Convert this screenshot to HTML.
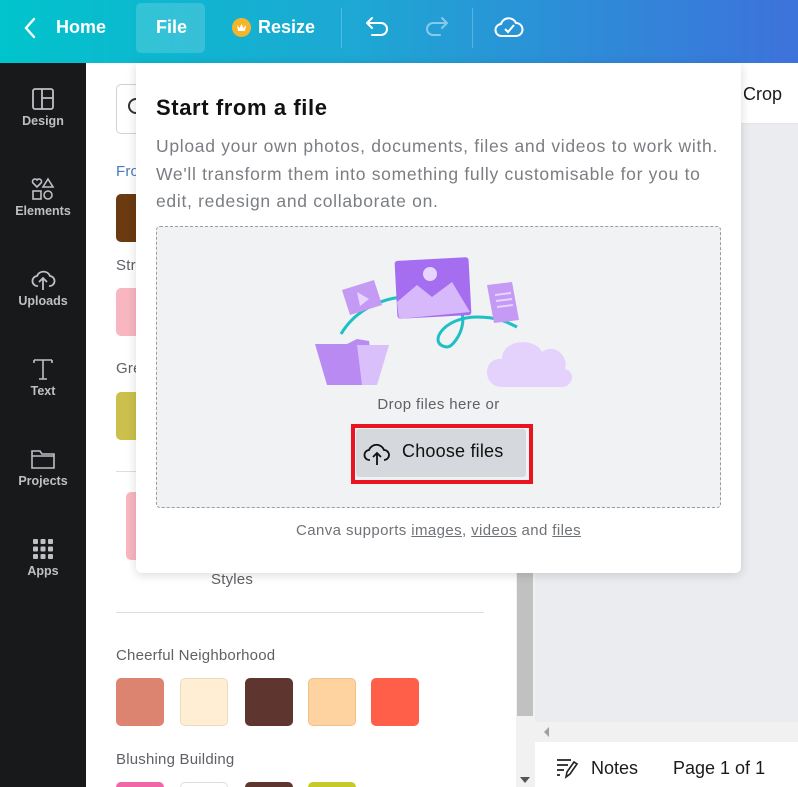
<!DOCTYPE html>
<html><head><style>
*{margin:0;padding:0;box-sizing:border-box}
html,body{width:798px;height:787px;overflow:hidden}
body{position:relative;font-family:"Liberation Sans",sans-serif;background:#fff}
.abs{position:absolute}
.hdr{left:0;top:0;width:798px;height:63px;background:linear-gradient(90deg,#00c4cc 0%,#1ea7d4 45%,#3d72db 100%)}
.hdr .t{position:absolute;top:17px;color:#fff;font-weight:bold;font-size:18px}
.side{left:0;top:63px;width:86px;height:724px;background:#18191b}
.si{position:absolute;width:86px;text-align:center;color:#bfc0c4;font-size:12.5px;font-weight:bold}
.sw{position:absolute;width:48px;height:48px;border-radius:5px}
.lbl{position:absolute;font-size:15px;color:#5e6166;letter-spacing:.2px}
</style></head><body>
<div class="abs hdr">
 <svg class="abs" style="left:20px;top:16px" width="20" height="24"><path d="M14 3 L6 12 L14 21" stroke="#fff" stroke-width="2.4" fill="none" stroke-linecap="round"/></svg>
 <div class="t" style="left:56px">Home</div>
 <div class="abs" style="left:136px;top:3px;width:69px;height:50px;background:rgba(255,255,255,.16);border-radius:5px"></div>
 <div class="t" style="left:156px">File</div>
 <div class="abs" style="left:232px;top:18px;width:19px;height:19px;border-radius:50%;background:#f5b52a"></div>
 <svg class="abs" style="left:235px;top:21px" width="13" height="13"><path d="M2 4 L4.5 7 L6.5 3 L8.5 7 L11 4 L10 10 L3 10Z" fill="#fff"/></svg>
 <div class="t" style="left:258px">Resize</div>
 <div class="abs" style="left:341px;top:8px;width:1px;height:40px;background:rgba(255,255,255,.25)"></div>
 <svg class="abs" style="left:364px;top:14px" width="28" height="26"><path d="M8 4 L3 9 L8 14 M3 9 H17 a6 6 0 0 1 0 12 H8" stroke="#fff" stroke-width="2" fill="none" stroke-linecap="round" stroke-linejoin="round"/></svg>
 <svg class="abs" style="left:422px;top:14px" width="28" height="26"><path d="M20 4 L25 9 L20 14 M25 9 H11 a6 6 0 0 0 0 12 H18" stroke="rgba(255,255,255,.45)" stroke-width="2" fill="none" stroke-linecap="round" stroke-linejoin="round"/></svg>
 <div class="abs" style="left:472px;top:8px;width:1px;height:40px;background:rgba(255,255,255,.25)"></div>
 <svg class="abs" style="left:494px;top:14px" width="30" height="26"><path d="M8 22 a6 6 0 0 1 -1 -12 a8 8 0 0 1 15 -1 a6 6 0 0 1 0 13 Z" stroke="#fff" stroke-width="2" fill="none"/><path d="M11 15 L14 18 L20 11" stroke="#fff" stroke-width="2" fill="none"/></svg>
</div>
<div class="abs side">
 <div class="si" style="top:24px"><svg width="24" height="24"><rect x="2" y="2" width="20" height="20" rx="2" stroke="#bfc0c4" stroke-width="1.8" fill="none"/><path d="M11 2V22M11 11H22" stroke="#bfc0c4" stroke-width="1.8"/></svg><div>Design</div></div>
 <div class="si" style="top:114px"><svg width="24" height="24"><path d="M6 10 L2 6 a2.4 2.4 0 0 1 4 -3 a2.4 2.4 0 0 1 4 3Z" stroke="#bfc0c4" stroke-width="1.6" fill="none"/><path d="M17 2 L22 10 H12Z" stroke="#bfc0c4" stroke-width="1.6" fill="none"/><rect x="2" y="14" width="8" height="8" stroke="#bfc0c4" stroke-width="1.6" fill="none"/><circle cx="17" cy="18" r="4" stroke="#bfc0c4" stroke-width="1.6" fill="none"/></svg><div>Elements</div></div>
 <div class="si" style="top:204px"><svg width="26" height="24"><path d="M8 19 a5 5 0 0 1 -1 -10 a7 7 0 0 1 13 0 a5 5 0 0 1 -1 10" stroke="#bfc0c4" stroke-width="1.8" fill="none"/><path d="M13 23V12M9 15L13 11L17 15" stroke="#bfc0c4" stroke-width="1.8" fill="none"/></svg><div>Uploads</div></div>
 <div class="si" style="top:294px"><svg width="24" height="24"><path d="M3 3H21M12 3V22M8 22H16M3 3V6M21 3V6" stroke="#bfc0c4" stroke-width="1.6" fill="none"/></svg><div>Text</div></div>
 <div class="si" style="top:384px"><svg width="26" height="24"><path d="M2 4H10L12 7H24V21H2Z M2 9H24" stroke="#bfc0c4" stroke-width="1.6" fill="none"/></svg><div>Projects</div></div>
 <div class="si" style="top:474px"><svg width="24" height="24"><g fill="#bfc0c4"><rect x="2" y="2" width="5" height="5" rx="1"/><rect x="9.5" y="2" width="5" height="5" rx="1"/><rect x="17" y="2" width="5" height="5" rx="1"/><rect x="2" y="9.5" width="5" height="5" rx="1"/><rect x="9.5" y="9.5" width="5" height="5" rx="1"/><rect x="17" y="9.5" width="5" height="5" rx="1"/><rect x="2" y="17" width="5" height="5" rx="1"/><rect x="9.5" y="17" width="5" height="5" rx="1"/><rect x="17" y="17" width="5" height="5" rx="1"/></g></svg><div>Apps</div></div>
</div>
<div class="abs" style="left:116px;top:84px;width:60px;height:50px;border:1px solid #d0d2d6;border-radius:5px"></div>
<div class="abs" style="left:128px;top:98px;width:16px;height:16px;border:2px solid #333;border-radius:50%"></div>
<div class="lbl" style="left:116px;top:163px;color:#4a78b8">From</div>
<div class="sw" style="left:116px;top:194px;background:#6b3a10"></div>
<div class="lbl" style="left:116px;top:257px">Str</div>
<div class="sw" style="left:116px;top:288px;background:#f8b6c0"></div>
<div class="lbl" style="left:116px;top:360px">Gre</div>
<div class="sw" style="left:116px;top:392px;background:#cbc04c"></div>
<div class="abs" style="left:116px;top:471px;width:368px;height:1px;background:#dcdde0"></div>
<div class="abs" style="left:126px;top:492px;width:30px;height:68px;background:#f8b6c0;border-radius:5px"></div>
<div class="lbl" style="left:211px;top:571px">Styles</div>
<div class="abs" style="left:116px;top:612px;width:368px;height:1px;background:#dcdde0"></div>
<div class="lbl" style="left:116px;top:647px">Cheerful Neighborhood</div>
<div class="sw" style="left:116px;top:678px;background:#dd8471"></div>
<div class="sw" style="left:180px;top:678px;background:#ffeed4;border:1px solid #eadbbf"></div>
<div class="sw" style="left:245px;top:678px;background:#5e362f"></div>
<div class="sw" style="left:308px;top:678px;background:#ffd3a0;border:1px solid #f0c08a"></div>
<div class="sw" style="left:371px;top:678px;background:#ff5e48"></div>
<div class="lbl" style="left:116px;top:751px">Blushing Building</div>
<div class="sw" style="left:116px;top:782px;height:5px;border-radius:5px 5px 0 0;background:#f067a8"></div>
<div class="sw" style="left:180px;top:782px;height:5px;border-radius:5px 5px 0 0;background:#fff;border:1px solid #ddd;border-bottom:0"></div>
<div class="sw" style="left:245px;top:782px;height:5px;border-radius:5px 5px 0 0;background:#5e362f"></div>
<div class="sw" style="left:308px;top:782px;height:5px;border-radius:5px 5px 0 0;background:#c5c92a"></div>
<div class="abs" style="left:516px;top:63px;width:19px;height:724px;background:#f1f1f1"></div>
<div class="abs" style="left:517px;top:560px;width:16px;height:156px;background:#c1c1c1"></div>
<div class="abs" style="left:520px;top:777px;width:0;height:0;border-left:5px solid transparent;border-right:5px solid transparent;border-top:6px solid #555"></div>
<div class="abs" style="left:535px;top:63px;width:263px;height:61px;background:#fff;border-bottom:1px solid #e5e5e5"></div>
<div class="abs" style="left:743px;top:84px;font-size:18px;color:#1a1a1a">Crop</div>
<div class="abs" style="left:535px;top:124px;width:263px;height:598px;background:#ebecf0"></div>
<div class="abs" style="left:535px;top:722px;width:263px;height:20px;background:#f1f1f1"></div>
<div class="abs" style="left:544px;top:727px;width:0;height:0;border-top:5px solid transparent;border-bottom:5px solid transparent;border-right:5px solid #a0a0a0"></div>
<div class="abs" style="left:535px;top:742px;width:263px;height:45px;background:#fff"></div>
<svg class="abs" style="left:555px;top:757px" width="24" height="22"><path d="M2 3H16M2 8H13M2 13H9M2 18H5" stroke="#222" stroke-width="1.8"/><path d="M11 20 L12 15 L19 5 L22 7 L15 17Z" stroke="#222" stroke-width="1.6" fill="none"/></svg>
<div class="abs" style="left:591px;top:758px;font-size:18px;color:#1a1a1a">Notes</div>
<div class="abs" style="left:673px;top:758px;font-size:18px;color:#1a1a1a">Page 1 of 1</div>
<div class="abs" style="left:136px;top:63px;width:605px;height:510px;background:#fff;border-radius:0 0 6px 6px;box-shadow:0 2px 10px rgba(0,0,0,.15)">
 <div class="abs" style="left:20px;top:32px;font-size:22px;font-weight:bold;color:#111;letter-spacing:.6px;white-space:nowrap">Start from a file</div>
 <div class="abs" style="left:20px;top:70px;width:590px;font-size:17.5px;line-height:27.5px;color:#7a7d82;letter-spacing:.7px;white-space:nowrap">Upload your own photos, documents, files and videos to work with.<br>We'll transform them into something fully customisable for you to<br>edit, redesign and collaborate on.</div>
 <div class="abs" style="left:20px;top:163px;width:565px;height:282px;background:#f1f2f4;border:1px dashed #9a9ca0;border-radius:4px">
  <svg class="abs" style="left:150px;top:25px" width="265" height="135" viewBox="150 25 265 135">
   <path d="M184 107 C200 80 230 70 250 70" stroke="#1fbfc6" stroke-width="3" fill="none"/>
   <path d="M290 77 C320 80 300 120 290 120 C270 118 285 90 320 90 C340 90 350 95 360 100" stroke="#1fbfc6" stroke-width="3" fill="none"/>
   <path d="M185 63 L217 53 L225 78 L193 88Z" fill="#c49af5"/>
   <path d="M200 65 L212 72 L203 79Z" fill="#e8d5ff"/>
   <rect x="239" y="32" width="74" height="58" rx="3" fill="#a56ef0" transform="rotate(-3 276 61)"/>
   <path d="M240 75 L260 58 L275 70 L295 55 L313 85 L242 92Z" fill="#d7b8fb"/>
   <circle cx="273" cy="47" r="7" fill="#e8d5ff"/>
   <path d="M330 58 L355 55 L362 93 L337 96Z" fill="#c49af5"/>
   <path d="M338 68 L354 66 M339 74 L355 72 M340 80 L356 78" stroke="#e8d5ff" stroke-width="2"/>
   <path d="M158 117 L190 117 L200 112 L212 114 L218 158 L170 158Z" fill="#b98af2"/>
   <path d="M200 118 L232 118 L220 158 L205 158Z" fill="#d9c0fb"/>
   <path d="M345 160 C325 160 325 130 345 132 C345 112 378 110 385 125 C398 115 412 130 408 142 C420 145 415 160 405 160Z" fill="#e4d2fd"/>
  </svg>
  <div class="abs" style="left:0;top:169px;width:563px;text-align:center;font-size:15px;letter-spacing:.4px;color:#5e6166">Drop files here or</div>
  <div class="abs" style="left:194px;top:197px;width:182px;height:60px;border:4px solid #e8141f"></div>
  <div class="abs" style="left:199px;top:202px;width:170px;height:48px;background:#d5d8dc;border-radius:3px"></div>
  <svg class="abs" style="left:205px;top:212px" width="30" height="28"><path d="M8 21 a5 5 0 0 1 -1 -10 a8 8 0 0 1 15 0 a5 5 0 0 1 0 10" stroke="#111" stroke-width="1.8" fill="none"/><path d="M15 26V14M11 18L15 14L19 18" stroke="#111" stroke-width="1.8" fill="none"/></svg>
  <div class="abs" style="left:245px;top:214px;font-size:18px;color:#111;letter-spacing:.2px">Choose files</div>
 </div>
 <div class="abs" style="left:0;top:459px;width:605px;text-align:center;font-size:15px;letter-spacing:.4px;color:#6f7277">Canva supports <u>images</u>, <u>videos</u> and <u>files</u></div>
</div>
</body></html>
